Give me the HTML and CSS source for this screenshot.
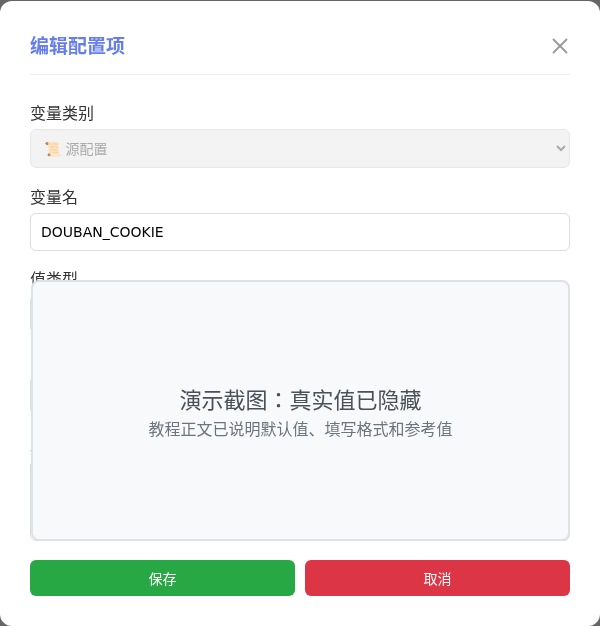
FILE: index.html
```html
<!DOCTYPE html>
<html lang="en">
<head>
    <meta charset="UTF-8">
    <meta name="viewport" content="width=device-width, initial-scale=1.0">
    <title>编辑配置项</title>
    <link rel="stylesheet" href="styles.css">
</head>
<body>
    <div class="modal">
        <div class="modal-header">
            <h2 class="modal-title">编辑配置项</h2>
            <button class="close-button" aria-label="关闭">
                <svg width="16" height="16" viewBox="0 0 16 16">
                    <path d="M1 1L15 15M15 1L1 15" stroke="#999" stroke-width="1.8" fill="none"/>
                </svg>
            </button>
        </div>
        <div class="modal-body">
            <div class="form-group form-group-first">
                <label class="form-label">变量类别</label>
                <select class="form-input form-select" disabled>
                    <option>📜 源配置</option>
                </select>
            </div>
            <div class="form-group">
                <label class="form-label">变量名</label>
                <input class="form-input" type="text" value="DOUBAN_COOKIE">
            </div>
            <div class="form-group">
                <label class="form-label">值类型</label>
                <div class="form-input"></div>
            </div>
            <div class="form-group form-group-hidden">
                <div class="form-input"></div>
            </div>
            <div class="form-group form-group-last">
                <label class="form-label">默认值</label>
                <div class="form-input form-textarea"></div>
            </div>
            <!-- covers the value fields -->
            <div class="mask">
                <div class="mask-title">演示截图：真实值已隐藏</div>
                <div class="mask-text">教程正文已说明默认值、填写格式和参考值</div>
            </div>
        </div>
        <div class="modal-footer">
            <button class="btn btn-save">保存</button>
            <button class="btn btn-cancel">取消</button>
        </div>
    </div>
</body>
</html>
```

FILE: styles.css
```css
html, body {
    height: 100%;
}
body {
    margin: 0;
    padding-top: 1px;
    box-sizing: border-box;
    background-color: #666;
    font-family: "DejaVu Sans", "Noto Sans CJK JP", sans-serif;
    overflow: hidden;
}
.modal {
    height: 625px;
    box-sizing: border-box;
    padding: 30px;
    background-color: #fff;
    border-radius: 12px;
    will-change: transform;
}

/***************** -header- *******************/

.modal-header {
    display: flex;
    justify-content: space-between;
    align-items: center;
    height: 30px;
    padding-bottom: 13px;
    border-bottom: 1px solid #eee;
}
.modal-title {
    margin: 0;
    font-size: 19px;
    line-height: 30px;
    font-weight: 600;
    color: #667eea;
}
.close-button {
    display: flex;
    margin-right: 2px;
    padding: 0;
    border: none;
    background: none;
}

/***************** -form- *******************/

.modal-body {
    position: relative;
    padding-top: 25px;
}
.form-group {
    margin-bottom: 15px;
}
.form-group-first {
    margin-bottom: 16px;
}
.form-group-hidden {
    margin-bottom: 17px;
    padding-top: 28px;
}
.form-group-last {
    margin-bottom: 0;
}
.form-label {
    display: block;
    margin-bottom: 3px;
    padding-top: 2px;
    font-size: 16px;
    line-height: 24px;
    color: #333;
}
.form-input {
    display: block;
    width: 100%;
    height: 38px;
    box-sizing: border-box;
    padding: 8px 10px;
    border: 1px solid #ddd;
    border-radius: 6px;
    background-color: #fff;
    font-family: inherit;
    font-size: 14px;
    color: #000;
}
.form-select {
    height: 39px;
    padding-left: 9px;
    background-color: #eee;
    color: #888;
    opacity: 0.7;
}
.form-textarea {
    height: 81px;
}
.mask {
    position: absolute;
    left: 1px;
    right: 0;
    top: 205px;
    height: 261px;
    box-sizing: border-box;
    display: flex;
    flex-direction: column;
    align-items: center;
    justify-content: center;
    padding-top: 8px;
    border: 2px solid #dee2e6;
    border-radius: 8px;
    background-color: #f8f9fa;
}
.mask-title {
    font-size: 22px;
    line-height: 30px;
    color: #495057;
}
.mask-text {
    font-size: 16px;
    line-height: 28px;
    color: #6c757d;
}

/***************** -footer- *******************/

.modal-footer {
    display: flex;
    gap: 10px;
    margin-top: 19px;
}
.btn {
    flex: 1;
    height: 36px;
    padding: 0;
    border: none;
    border-radius: 6px;
    font-family: inherit;
    font-size: 14px;
    color: #fff;
}
.btn-save {
    background-color: #28a745;
}
.btn-cancel {
    background-color: #dc3545;
}
```
